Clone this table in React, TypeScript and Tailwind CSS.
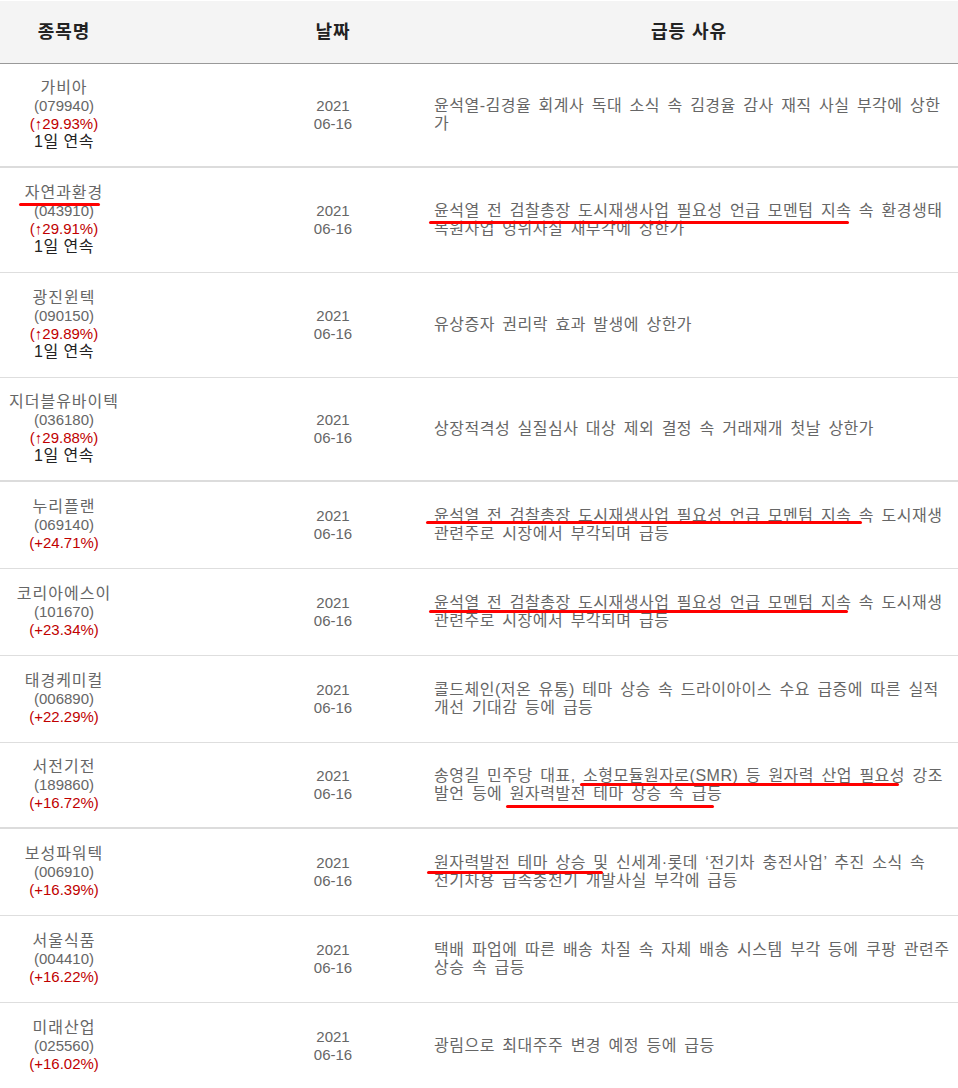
import React from "react";

type Mark = { top: number; left: number; width: number };
type Row = {
  name: string;
  code: string;
  rate: string;
  streak?: boolean;
  reason: string[];
  py: string;
  thick?: boolean;
  marks?: Mark[];
};

const rows: Row[] = [
  {
    name: "가비아",
    code: "(079940)",
    rate: "(↑29.93%)",
    streak: true,
    reason: ["윤석열-김경율 회계사 독대 소식 속 김경율 감사 재직 사실 부각에 상한", "가"],
    py: "py-[15px]",
    thick: true,
  },
  {
    name: "자연과환경",
    code: "(043910)",
    rate: "(↑29.91%)",
    streak: true,
    reason: ["윤석열 전 검찰총장 도시재생사업 필요성 언급 모멘텀 지속 속 환경생태", "복원사업 영위사실 재부각에 상한가"],
    py: "py-[16px]",
    marks: [
      { top: 35, left: 19, width: 81 },
      { top: 53, left: 429, width: 420 },
    ],
  },
  {
    name: "광진윈텍",
    code: "(090150)",
    rate: "(↑29.89%)",
    streak: true,
    reason: ["유상증자 권리락 효과 발생에 상한가"],
    py: "py-[16px]",
  },
  {
    name: "지더블유바이텍",
    code: "(036180)",
    rate: "(↑29.88%)",
    streak: true,
    reason: ["상장적격성 실질심사 대상 제외 결정 속 거래재개 첫날 상한가"],
    py: "py-[15px]",
    thick: true,
  },
  {
    name: "누리플랜",
    code: "(069140)",
    rate: "(+24.71%)",
    reason: ["윤석열 전 검찰총장 도시재생사업 필요성 언급 모멘텀 지속 속 도시재생", "관련주로 시장에서 부각되며 급등"],
    py: "py-[16px]",
    marks: [{ top: 39, left: 426, width: 436 }],
  },
  {
    name: "코리아에스이",
    code: "(101670)",
    rate: "(+23.34%)",
    reason: ["윤석열 전 검찰총장 도시재생사업 필요성 언급 모멘텀 지속 속 도시재생", "관련주로 시장에서 부각되며 급등"],
    py: "py-[16px]",
    marks: [{ top: 41, left: 429, width: 419 }],
  },
  {
    name: "태경케미컬",
    code: "(006890)",
    rate: "(+22.29%)",
    reason: ["콜드체인(저온 유통) 테마 상승 속 드라이아이스 수요 급증에 따른 실적", "개선 기대감 등에 급등"],
    py: "py-[16px]",
  },
  {
    name: "서전기전",
    code: "(189860)",
    rate: "(+16.72%)",
    reason: ["송영길 민주당 대표, 소형모듈원자로(SMR) 등 원자력 산업 필요성 강조", "발언 등에 원자력발전 테마 상승 속 급등"],
    py: "py-[15px]",
    thick: true,
    marks: [
      { top: 40, left: 580, width: 319 },
      { top: 62, left: 506, width: 208 },
    ],
  },
  {
    name: "보성파워텍",
    code: "(006910)",
    rate: "(+16.39%)",
    reason: ["원자력발전 테마 상승 및 신세계·롯데 ‘전기차 충전사업’ 추진 소식 속", "전기차용 급속충전기 개발사실 부각에 급등"],
    py: "py-[16px]",
    marks: [{ top: 42, left: 427, width: 176 }],
  },
  {
    name: "서울식품",
    code: "(004410)",
    rate: "(+16.22%)",
    reason: ["택배 파업에 따른 배송 차질 속 자체 배송 시스템 부각 등에 쿠팡 관련주", "상승 속 급등"],
    py: "py-[16px]",
  },
  {
    name: "미래산업",
    code: "(025560)",
    rate: "(+16.02%)",
    reason: ["광림으로 최대주주 변경 예정 등에 급등"],
    py: "py-[16px]",
  },
];

export default function App() {
  return (
    <div
      className="w-[958px] bg-white text-[15px] leading-[18px] text-[#666]"
      style={{ fontFamily: '"Liberation Sans", "Noto Sans CJK KR", sans-serif' }}
    >
      <div className="flex h-[64px] items-center border-t border-t-white border-b border-b-[#999] bg-[#f4f4f4] text-[18px] font-bold tracking-[1px] text-[#222]">
        <div className="w-[128px] text-center">종목명</div>
        <div className="w-[118px]" />
        <div className="w-[174px] text-center">날짜</div>
        <div className="flex-1 text-center">급등 사유</div>
      </div>
      {rows.map((r, i) => (
        <div
          key={i}
          className={`relative flex items-center ${r.py} ${
            r.thick ? "border-b-2 border-[#dcdcdc]" : "border-b border-[#dedede]"
          }`}
        >
          <div className="flex w-[128px] flex-col items-center text-center">
            <span className="whitespace-nowrap text-[16px] tracking-[1px]">{r.name}</span>
            <span>{r.code}</span>
            <span className="text-[#c00000]">{r.rate}</span>
            {r.streak && <span className="text-[16px] tracking-[0.5px] text-[#222]">1일 연속</span>}
          </div>
          <div className="w-[118px]" />
          <div className="flex w-[174px] flex-col items-center">
            <span>2021</span>
            <span>06-16</span>
          </div>
          <div className="flex flex-1 flex-col pl-[14px] text-[16px] tracking-[0.5px] [word-spacing:2.5px]">
            {r.reason.map((l, j) => (
              <span key={j} className="whitespace-nowrap">
                {l}
              </span>
            ))}
          </div>
          {r.marks?.map((m, k) => (
            <div
              key={k}
              className="absolute h-[3px] rounded-full bg-[#ff0000]"
              style={{ top: m.top, left: m.left, width: m.width }}
            />
          ))}
        </div>
      ))}
    </div>
  );
}
